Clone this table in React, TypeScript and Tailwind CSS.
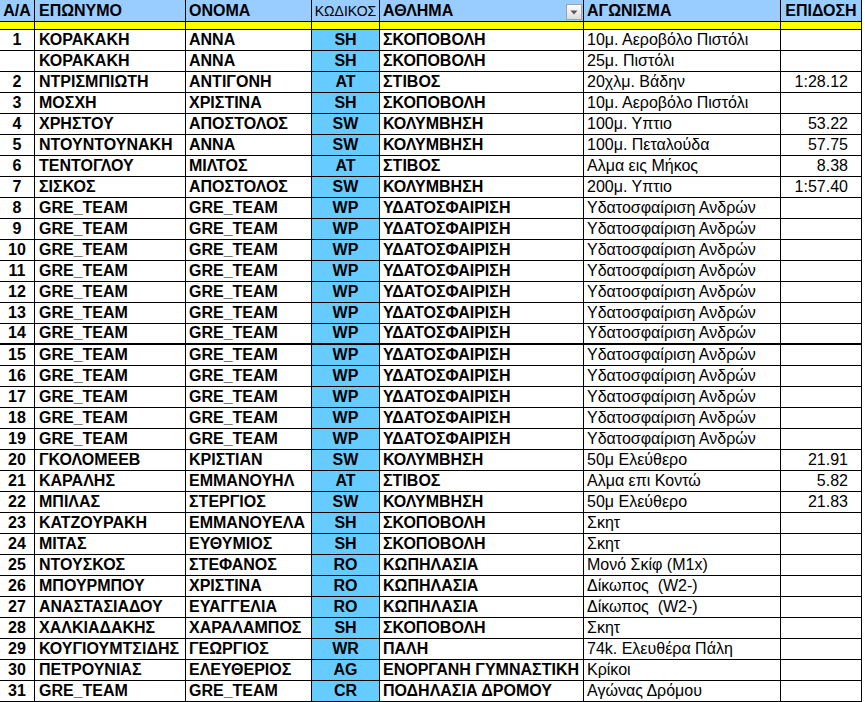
import React from 'react'

type Row = [string, string, string, string, string, string, string]

const team: Row = ['', 'GRE_TEAM', 'GRE_TEAM', 'WP', 'ΥΔΑΤΟΣΦΑΙΡΙΣΗ', 'Υδατοσφαίριση Ανδρών', '']

const rows: Row[] = [
  ['1', 'ΚΟΡΑΚΑΚΗ', 'ΑΝΝΑ', 'SH', 'ΣΚΟΠΟΒΟΛΗ', '10μ. Αεροβόλο Πιστόλι', ''],
  ['', 'ΚΟΡΑΚΑΚΗ', 'ΑΝΝΑ', 'SH', 'ΣΚΟΠΟΒΟΛΗ', '25μ. Πιστόλι', ''],
  ['2', 'ΝΤΡΙΣΜΠΙΩΤΗ', 'ΑΝΤΙΓΟΝΗ', 'AT', 'ΣΤΙΒΟΣ', '20χλμ. Βάδην', '1:28.12'],
  ['3', 'ΜΟΣΧΗ', 'ΧΡΙΣΤΙΝΑ', 'SH', 'ΣΚΟΠΟΒΟΛΗ', '10μ. Αεροβόλο Πιστόλι', ''],
  ['4', 'ΧΡΗΣΤΟΥ', 'ΑΠΟΣΤΟΛΟΣ', 'SW', 'ΚΟΛΥΜΒΗΣΗ', '100μ. Υπτιο', '53.22'],
  ['5', 'ΝΤΟΥΝΤΟΥΝΑΚΗ', 'ΑΝΝΑ', 'SW', 'ΚΟΛΥΜΒΗΣΗ', '100μ. Πεταλούδα', '57.75'],
  ['6', 'ΤΕΝΤΟΓΛΟΥ', 'ΜΙΛΤΟΣ', 'AT', 'ΣΤΙΒΟΣ', 'Αλμα εις Μήκος', '8.38'],
  ['7', 'ΣΙΣΚΟΣ', 'ΑΠΟΣΤΟΛΟΣ', 'SW', 'ΚΟΛΥΜΒΗΣΗ', '200μ. Υπτιο', '1:57.40'],
  ...[8, 9, 10, 11, 12, 13, 14, 15, 16, 17, 18, 19].map((n) => [String(n), ...team.slice(1)] as Row),
  ['20', 'ΓΚΟΛΟΜΕΕΒ', 'ΚΡΙΣΤΙΑΝ', 'SW', 'ΚΟΛΥΜΒΗΣΗ', '50μ Ελεύθερο', '21.91'],
  ['21', 'ΚΑΡΑΛΗΣ', 'ΕΜΜΑΝΟΥΗΛ', 'AT', 'ΣΤΙΒΟΣ', 'Αλμα επι Κοντώ', '5.82'],
  ['22', 'ΜΠΙΛΑΣ', 'ΣΤΕΡΓΙΟΣ', 'SW', 'ΚΟΛΥΜΒΗΣΗ', '50μ Ελεύθερο', '21.83'],
  ['23', 'ΚΑΤΖΟΥΡΑΚΗ', 'ΕΜΜΑΝΟΥΕΛΑ', 'SH', 'ΣΚΟΠΟΒΟΛΗ', 'Σκητ', ''],
  ['24', 'ΜΙΤΑΣ', 'ΕΥΘΥΜΙΟΣ', 'SH', 'ΣΚΟΠΟΒΟΛΗ', 'Σκητ', ''],
  ['25', 'ΝΤΟΥΣΚΟΣ', 'ΣΤΕΦΑΝΟΣ', 'RO', 'ΚΩΠΗΛΑΣΙΑ', 'Μονό Σκίφ (M1x)', ''],
  ['26', 'ΜΠΟΥΡΜΠΟΥ', 'ΧΡΙΣΤΙΝΑ', 'RO', 'ΚΩΠΗΛΑΣΙΑ', 'Δίκωπος  (W2-)', ''],
  ['27', 'ΑΝΑΣΤΑΣΙΑΔΟΥ', 'ΕΥΑΓΓΕΛΙΑ', 'RO', 'ΚΩΠΗΛΑΣΙΑ', 'Δίκωπος  (W2-)', ''],
  ['28', 'ΧΑΛΚΙΑΔΑΚΗΣ', 'ΧΑΡΑΛΑΜΠΟΣ', 'SH', 'ΣΚΟΠΟΒΟΛΗ', 'Σκητ', ''],
  ['29', 'ΚΟΥΓΙΟΥΜΤΣΙΔΗΣ', 'ΓΕΩΡΓΙΟΣ', 'WR', 'ΠΑΛΗ', '74k. Ελευθέρα Πάλη', ''],
  ['30', 'ΠΕΤΡΟΥΝΙΑΣ', 'ΕΛΕΥΘΕΡΙΟΣ', 'AG', 'ΕΝΟΡΓΑΝΗ ΓΥΜΝΑΣΤΙΚΗ', 'Κρίκοι', ''],
  ['31', 'GRE_TEAM', 'GRE_TEAM', 'CR', 'ΠΟΔΗΛΑΣΙΑ ΔΡΟΜΟΥ', 'Αγώνας Δρόμου', ''],
]

function FilterButton() {
  return (
    <div className="w-[16px] h-[16px] mr-[1px] mb-[1px] border border-[#a0a0a0] bg-gradient-to-b from-[#fdfdfd] to-[#dcdcdc] flex items-center justify-center">
      <svg width="8" height="5" viewBox="0 0 8 5">
        <path d="M0.5 0.5 L7.5 0.5 L4 4.5 Z" fill="#555" />
      </svg>
    </div>
  )
}

export default function App() {
  return (
    <div className="bg-white w-[865px] h-[702px] overflow-hidden text-black text-[16px]" style={{ fontFamily: '"Liberation Sans", Arial, sans-serif' }}>
      <div className="w-[862px]">
        {/* Header */}
        <div className="flex h-[22px] bg-[#99ccff] border-b border-black font-bold leading-[20px]">
          <div className="w-[35px] border-r border-black flex items-end justify-center">Α/Α</div>
          <div className="w-[151px] border-r border-black flex items-end pl-[4px]">ΕΠΩΝΥΜΟ</div>
          <div className="w-[126px] border-r border-black flex items-end pl-[3px]">ΟΝΟΜΑ</div>
          <div className="w-[68px] border-r border-black flex items-end justify-center font-normal text-[14px]">ΚΩΔΙΚΟΣ</div>
          <div className="w-[204px] border-r border-black flex items-end justify-between pl-[3px]">
            <span>ΑΘΛΗΜΑ</span>
            <FilterButton />
          </div>
          <div className="w-[197px] border-r border-black flex items-end pl-[3px]">ΑΓΩΝΙΣΜΑ</div>
          <div className="w-[81px] border-r border-black flex items-end justify-center">ΕΠΙΔΟΣΗ</div>
        </div>

        {/* Yellow band */}
        <div className="flex h-[8px] bg-[#ffff00] border-b border-black">
          <div className="w-[35px] border-r border-black" />
          <div className="w-[151px] border-r border-black" />
          <div className="w-[126px] border-r border-black" />
          <div className="w-[68px] border-r border-black" />
          <div className="w-[204px] border-r border-black" />
          <div className="w-[197px] border-r border-black" />
          <div className="w-[81px] border-r border-black" />
        </div>

        {rows.map((r, i) => (
          <div
            key={i}
            className={`flex h-[21px] leading-[20px] whitespace-nowrap ${r[0] === '14' ? 'border-b-2' : 'border-b'} border-black`}
          >
            <div className="w-[35px] border-r border-black flex items-end justify-center font-bold">{r[0]}</div>
            <div className="w-[151px] border-r border-black flex items-end pl-[4px] font-bold overflow-hidden">{r[1]}</div>
            <div className="w-[126px] border-r border-black flex items-end pl-[3px] font-bold overflow-hidden">{r[2]}</div>
            <div className="w-[68px] border-r border-black flex items-end justify-center font-bold bg-[#66ccff]">{r[3]}</div>
            <div className="w-[204px] border-r border-black flex items-end pl-[3px] font-bold overflow-hidden">{r[4]}</div>
            <div className="w-[197px] border-r border-black flex items-end pl-[3px] overflow-hidden whitespace-pre">{r[5]}</div>
            <div className="w-[81px] border-r border-black flex items-end justify-end pr-[13px]">{r[6]}</div>
          </div>
        ))}
      </div>
    </div>
  )
}
